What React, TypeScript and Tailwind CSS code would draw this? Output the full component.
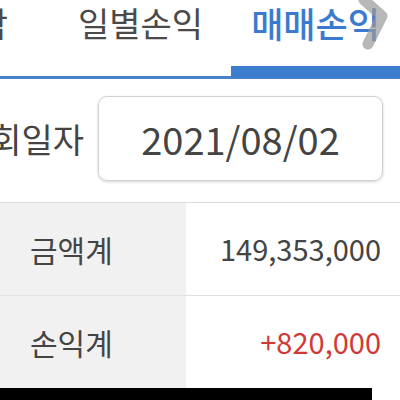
export default function App() {
  const ff = { fontFamily: '"Noto Sans CJK KR", "Noto Sans", sans-serif' };
  return (
    <div className="relative w-[400px] h-[400px] overflow-hidden bg-white" style={ff}>
      {/* Tabs */}
      <div className="relative h-[79px]">
        <div className="flex h-[46px] items-center whitespace-nowrap text-[34px] leading-[46px] text-[#4a4a4a]">
          <span className="ml-[-140px] w-[148px] shrink-0 text-right">종목매각</span>
          <span className="ml-[70px] shrink-0">일별손익</span>
          <span className="ml-[48px] shrink-0 text-[35px] text-[#3a7bcf] font-medium">매매손익</span>
        </div>
        <div className="absolute left-0 right-0 top-[76px] h-[3px] bg-[#4a80c6]" />
        <div className="absolute left-[231px] right-0 top-[66px] h-[12px] bg-[#3d7dcf]" />
        <svg className="absolute left-[354px] top-[-4px]" width="40" height="56" viewBox="0 0 40 56">
          <polyline points="10,4 28,20 14,48" fill="none" stroke="#9a9a9a" strokeOpacity="0.7" strokeWidth="11" strokeLinecap="round" strokeLinejoin="round" />
        </svg>
      </div>
      {/* Date row */}
      <div className="flex items-center h-[123px] pb-[4px]">
        <span className="ml-[-60px] w-[144px] shrink-0 whitespace-nowrap text-right text-[34px] text-[#444]">조회일자</span>
        <div className="ml-[14px] flex h-[85px] w-[285px] shrink-0 items-center justify-center rounded-[9px] border border-[#d0d0d0] shadow-[0_1px_3px_rgba(0,0,0,0.18)]">
          <span className="text-[38px] text-[#444]">2021/08/02</span>
        </div>
      </div>
      {/* Table */}
      <div className="border-t border-[#dcdcdc]">
        <div className="flex h-[93px] border-b border-[#e2e2e2]">
          <div className="w-[186px] bg-[#f1f1f1] flex items-center pl-[30px] text-[30px] text-[#444]">금액계</div>
          <div className="flex-1 flex items-center justify-end pr-[19px] text-[29px] text-[#444]">149,353,000</div>
        </div>
        <div className="flex h-[92px]">
          <div className="w-[186px] bg-[#f1f1f1] flex items-center pl-[30px] text-[30px] text-[#444]">손익계</div>
          <div className="flex-1 flex items-center justify-end pr-[19px] text-[29px] text-[#d03a36]">+820,000</div>
        </div>
      </div>
      <div className="absolute left-0 top-[388px] h-[12px] w-[372px] bg-black" />
    </div>
  );
}
